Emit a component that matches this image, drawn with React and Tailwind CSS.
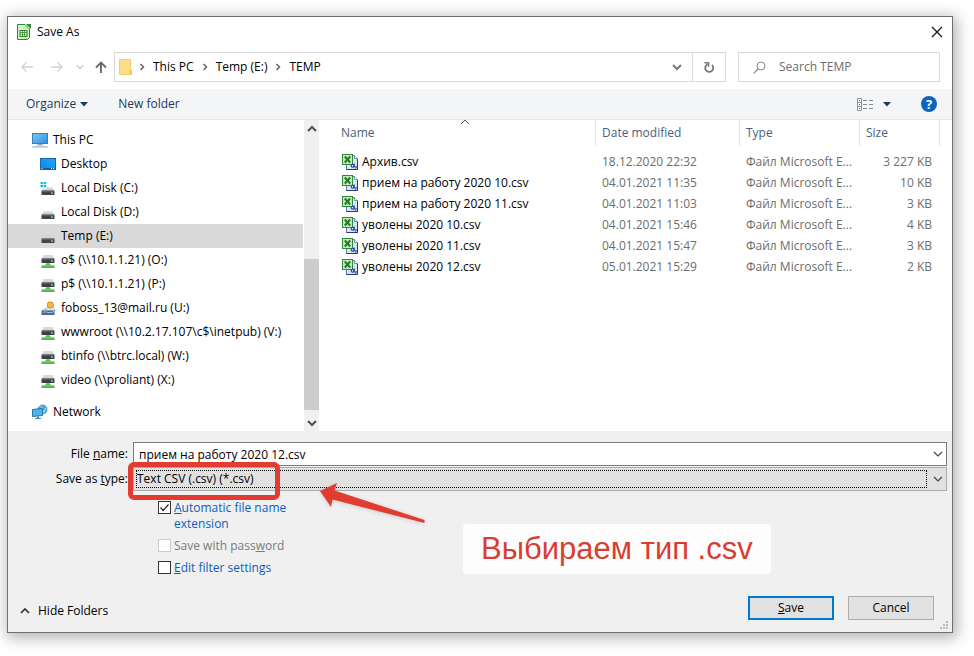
import React, { useState } from "react";

const treeItems = [
  { label: "This PC", icon: "pc", root: true },
  { label: "Desktop", icon: "desktop" },
  { label: "Local Disk (C:)", icon: "system" },
  { label: "Local Disk (D:)", icon: "disk" },
  { label: "Temp (E:)", icon: "disk", selected: true },
  { label: "o$ (\\\\10.1.1.21) (O:)", icon: "share" },
  { label: "p$ (\\\\10.1.1.21) (P:)", icon: "share" },
  { label: "foboss_13@mail.ru (U:)", icon: "user" },
  { label: "wwwroot (\\\\10.2.17.107\\c$\\inetpub) (V:)", icon: "share" },
  { label: "btinfo (\\\\btrc.local) (W:)", icon: "share" },
  { label: "video (\\\\proliant) (X:)", icon: "share" },
];

const files = [
  ["Архив.csv", "18.12.2020 22:32", "3 227 KB"],
  ["прием на работу 2020 10.csv", "04.01.2021 11:35", "10 KB"],
  ["прием на работу 2020 11.csv", "04.01.2021 11:03", "3 KB"],
  ["уволены 2020 10.csv", "04.01.2021 15:46", "4 KB"],
  ["уволены 2020 11.csv", "04.01.2021 15:47", "3 KB"],
  ["уволены 2020 12.csv", "05.01.2021 15:29", "2 KB"],
];

function Chevron({ dir = "down", className = "", width = 1.5, size = 10 }) {
  const d = {
    down: "M1 3l4 4 4-4",
    up: "M1 7l4-4 4 4",
    right: "M3.500 2l3 3-3 3",
  }[dir];
  return (
    <svg width={size} height={size} viewBox="0 0 10 10" className={"shrink-0 " + className} aria-hidden="true">
      <path d={d} fill="none" stroke="currentColor" strokeWidth={width} />
    </svg>
  );
}

function CalcIcon() {
  return (
    <svg width="16" height="16" viewBox="0 0 16 16" aria-hidden="true" className="shrink-0">
      <path d="M1.500.500h7.500l4.500 4.500v8.500l-2 2h-10z" fill="#d5efc9" stroke="#2f8d31" />
      <path d="M10 0h5v5z" fill="#2f8d31" />
      <path d="M3.500 6h8v7h-8z" fill="#2c8a27" />
      <path d="M4.500 7h1.600v1.300H4.500zM6.800 7h1.400v1.300H6.800zM8.900 7h1.600v1.300H8.900zM4.500 8.900h1.600v1.300H4.500zM6.800 8.900h1.400v1.300H6.800zM8.900 8.900h1.600v1.300H8.900zM4.500 10.800h1.600v1.300H4.500zM6.800 10.800h1.400v1.300H6.800zM8.900 10.800h1.600v1.300H8.900z" fill="#dff5d6" />
    </svg>
  );
}

function Drive() {
  return (
    <>
      <path d="M3.500 7.500h9L14.500 11h-13z" fill="#d3d6d7" />
      <rect x="1.500" y="10.500" width="13" height="4.500" rx=".6" fill="#3f4647" />
      <rect x="2" y="10.500" width="12" height="1" fill="#777e80" />
      <rect x="11" y="12.500" width="2" height="1" fill="#b9f0c4" />
    </>
  );
}

function TreeIcon({ kind }) {
  return (
    <svg width="16" height="16" viewBox="0 0 16 16" aria-hidden="true" className="shrink-0">
      <defs>
        <linearGradient id="screen" x1="0" y1="0" x2="1" y2="1">
          <stop offset="0" stopColor="#7cc8fa" />
          <stop offset="1" stopColor="#2b93e2" />
        </linearGradient>
        <linearGradient id="desk" x1="0" y1="1" x2="1" y2="0">
          <stop offset="0" stopColor="#0a84e8" />
          <stop offset="1" stopColor="#29a5fb" />
        </linearGradient>
      </defs>
      {kind === "pc" && (
        <>
          <rect x=".5" y="1.500" width="15" height="10" fill="url(#screen)" stroke="#3f7fae" />
          <path d="M6 12h4v1H6zM4 12.700h8v.8H4z" fill="#91a8b8" />
          <path d="M0 14.500h16v1H0z" fill="#8aa6cf" />
        </>
      )}
      {kind === "desktop" && (
        <>
          <rect x=".5" y="2.500" width="15" height="11" fill="url(#desk)" stroke="#1668ad" />
          <path d="M1 12h14v1H1z" fill="#0b5c9f" />
          <path d="M1.500 12h1v1h-1zM11 12h1v1h-1zM13 12h1v1h-1z" fill="#fff" />
        </>
      )}
      {kind === "disk" && <Drive />}
      {kind === "system" && (
        <>
          <Drive />
          <path d="M0 1h7v7.500H0z" fill="#fff" />
          <path d="M.5 2h2.500v2.300H.5zM3.700 2h2.500v2.300H3.700zM.5 5h2.500v2.300H.5zM3.700 5h2.500v2.300H3.700z" fill="#19b9d2" />
        </>
      )}
      {kind === "share" && (
        <>
          <path d="M3.500 3h9l2 4h-13z" fill="#d6d8d7" />
          <rect x="1.500" y="6.500" width="13" height="4.500" rx=".6" fill="#3a4042" />
          <rect x="2" y="6.500" width="12" height="1" fill="#6b7173" />
          <rect x="11" y="8.500" width="2" height="1" fill="#d8e4e0" />
          <path d="M6 11h4v2H6z" fill="#7cca72" />
          <path d="M1.500 13.500H5v-1h6v1h3.500V16h-13z" fill="#4fb344" />
          <path d="M1.500 13.500h13v.8h-13z" fill="#8ed886" />
        </>
      )}
      {kind === "user" && (
        <>
          <path d="M1.500 11l2-2.500h3L8 11z" fill="#ccd4da" />
          <path d="M5.500 11c0-3.500 2-4 5-4s4.500.5 4.500 4z" fill="#dce9f5" stroke="#7f9bb8" strokeWidth=".6" />
          <circle cx="10.300" cy="5" r="3.200" fill="#f7b63c" stroke="#c47a17" strokeWidth=".7" />
          <rect x="1.500" y="10.500" width="13" height="4.500" rx=".6" fill="#47678c" />
          <path d="M3 12.500c3-2 6 2 11-1" stroke="#a9c9e8" fill="none" />
        </>
      )}
      {kind === "network" && (
        <>
          <circle cx="10.500" cy="5.500" r="5" fill="#54a5d5" />
          <path d="M7 3c2-2 4 1 3 3s3 1 4-2M9 9l4-2" stroke="#b8e2f4" fill="none" />
          <path d="M.5 5.500l10-1v7l-10 1z" fill="#4db4ec" stroke="#2375ab" />
          <path d="M5 12.500h2v1.500H5zM3 14h6v1H3z" fill="#4b88ad" />
        </>
      )}
    </svg>
  );
}

function CsvIcon() {
  return (
    <svg width="16" height="16" viewBox="0 0 16 16" aria-hidden="true" className="shrink-0">
      <path d="M4.500 1.500h8l3 3v11h-11z" fill="#d9e4fa" stroke="#6176ae" />
      <path d="M12.500 1.500v3h3" fill="#fff" stroke="#6176ae" strokeWidth=".8" />
      <path d="M15.500 5v10.500h-11" fill="none" stroke="#26397c" />
      <rect x=".5" y=".5" width="10" height="10" fill="#c5e8bd" stroke="#2e8a35" />
      <path d="M2.800 2.500l5.400 6M8.200 2.500l-5.400 6" stroke="#1f7d24" strokeWidth="2" />
      <circle cx="10.600" cy="11.700" r="1.400" fill="#fff" stroke="#2947a0" strokeWidth="1.200" />
      <path d="M12.200 9.500v4M14 12v1.500l-.8 1" fill="none" stroke="#2947a0" strokeWidth="1.200" />
    </svg>
  );
}

function TitleBar() {
  return (
    <header className="flex h-[30px] items-center pl-2 pr-[5px]">
      <CalcIcon />
      <h1 className="ml-[5px] flex-1">Save As</h1>
      <button type="button" aria-label="Close" className="p-1">
        <svg width="12" height="12" viewBox="0 0 12 12" aria-hidden="true">
          <path d="M1 1l10 10M11 1L1 11" stroke="#111" strokeWidth="1.200" />
        </svg>
      </button>
    </header>
  );
}

function NavBar() {
  return (
    <nav className="flex items-center pb-[7px] pl-3 pr-3 pt-[5px]">
      <button type="button" aria-label="Back" className="text-[#d2d2d2]">
        <svg width="14" height="12" viewBox="0 0 14 12" aria-hidden="true"><path d="M13 6H2M6.500 1.500L2 6l4.500 4.500" fill="none" stroke="currentColor" strokeWidth="1.400" /></svg>
      </button>
      <button type="button" aria-label="Forward" className="ml-4 text-[#d2d2d2]">
        <svg width="14" height="12" viewBox="0 0 14 12" aria-hidden="true"><path d="M1 6h11M7.500 1.500L12 6l-4.500 4.500" fill="none" stroke="currentColor" strokeWidth="1.400" /></svg>
      </button>
      <button type="button" aria-label="Recent locations" className="ml-3 text-[#d2d2d2]">
        <Chevron size={8} width={2} />
      </button>
      <button type="button" aria-label="Up" className="ml-2.5 text-[#6a6a6a]">
        <svg width="14" height="14" viewBox="0 0 14 14" aria-hidden="true"><path d="M7 13V2.500M2 7.500l5-5 5 5" fill="none" stroke="currentColor" strokeWidth="1.900" /></svg>
      </button>
      <div className="ml-1.5 flex h-[30px] flex-1 items-center border border-[#d9d9d9]">
        <svg width="14" height="16" viewBox="0 0 14 16" className="ml-1" aria-hidden="true">
          <path d="M0 0h12v16H0z" fill="#fbdf86" />
          <path d="M.5.500h11v15H.5z" fill="none" stroke="#f1cf6e" />
          <path d="M10.500 16v-4l2.500-1.500V16z" fill="#f0c654" />
        </svg>
        <Chevron dir="right" className="ml-1 text-[#666]" />
        <a href="#this-pc" className="ml-1.5">This PC</a>
        <Chevron dir="right" className="ml-1.5 text-[#666]" />
        <a href="#temp-e" className="ml-1.5">Temp (E:)</a>
        <Chevron dir="right" className="ml-1.5 text-[#666]" />
        <a href="#temp" className="ml-1.5">TEMP</a>
        <button type="button" aria-label="Previous locations" className="ml-auto mr-2.5 text-[#777]">
          <Chevron width={2} />
        </button>
        <button type="button" aria-label="Refresh" className="flex h-full w-[33px] items-center justify-center border-l border-[#d9d9d9] text-[#777]">
          <svg width="12" height="14" viewBox="0 0 12 14" aria-hidden="true">
            <path d="M4.500 4.300a4 4 0 1 0 4.500.7" fill="none" stroke="currentColor" strokeWidth="1.800" />
            <path d="M1.500 2.800h4v4" fill="none" stroke="currentColor" strokeWidth="1.500" />
          </svg>
        </button>
      </div>
      <div className="ml-3 flex h-[30px] w-[202px] items-center border border-[#d9d9d9] pl-3.5">
        <svg width="13" height="13" viewBox="0 0 13 13" className="shrink-0" aria-hidden="true">
          <circle cx="8" cy="5" r="4" fill="none" stroke="#888" />
          <path d="M5 8L.7 12.300" stroke="#888" strokeWidth="1.200" />
        </svg>
        <input type="search" aria-label="Search TEMP" placeholder="Search TEMP" className="ml-[13px] w-full min-w-0 bg-transparent outline-none placeholder:text-[#6d6d6d] placeholder:opacity-100" />
      </div>
    </nav>
  );
}

function Toolbar() {
  return (
    <div className="flex h-[31px] items-center border-b border-[#e6e8ea] bg-[#f4f5f7] pl-[18px] pr-[15px] text-[#1e395b]">
      <button type="button" className="flex items-center gap-1">
        Organize
        <svg width="8" height="5" viewBox="0 0 8 5" aria-hidden="true"><path d="M0 0h8L4 4.500z" fill="#1e395b" /></svg>
      </button>
      <button type="button" className="ml-[30px]">New folder</button>
      <button type="button" aria-label="Change your view" className="ml-auto flex items-center gap-[9px]">
        <svg width="17" height="13" viewBox="0 0 17 13" aria-hidden="true">
          <path d="M.5.500h4v12h-4zM.5 4.500h4M.5 8.500h4" fill="#fff" stroke="#8c9096" />
          <path d="M2 2h1v1H2zM2 6h1v1H2zM2 10h1v1H2z" fill="#55595f" />
          <path d="M6 2.500h4M12 2.500h4M6 6.500h4M12 6.500h4M6 10.500h4M12 10.500h4" stroke="#858a90" />
        </svg>
        <svg width="8" height="5" viewBox="0 0 8 5" aria-hidden="true"><path d="M0 0h8L4 4.500z" fill="#1e395b" /></svg>
      </button>
      <button type="button" aria-label="Help" className="ml-[30px] flex size-4 items-center justify-center rounded-full bg-[#0a64c0] text-[13px] font-bold leading-4 text-white">?</button>
    </div>
  );
}

function Sidebar() {
  return (
    <aside className="flex w-[312px] shrink-0">
      <ul className="mr-px min-w-0 flex-1 pb-[7px] pt-2">
        {treeItems.map((item) => (
          <li key={item.label} className={item.selected ? "bg-[#d9d9d9]" : ""}>
            <a href="#folder" className={"flex h-6 items-center gap-[5px] whitespace-nowrap " + (item.root ? "pl-6" : "pl-8")}>
              <TreeIcon kind={item.icon} />
              {item.label}
            </a>
          </li>
        ))}
        <li className="mt-2">
          <a href="#network" className="flex h-6 items-center gap-[5px] pl-6">
            <TreeIcon kind="network" />
            Network
          </a>
        </li>
      </ul>
      <div className="flex w-[15px] flex-col bg-[#f0f0f0] text-[#505050]">
        <button type="button" aria-label="Scroll up" className="flex h-[18px] items-center justify-center"><Chevron dir="up" width={2} /></button>
        <div className="flex-1" />
        <div className="h-[151px] bg-[#cdcdcd]" />
        <button type="button" aria-label="Scroll down" className="flex h-[21px] items-center justify-center pt-1"><Chevron width={2} /></button>
      </div>
      <div className="w-px" />
    </aside>
  );
}

function FileTable() {
  const head = "h-[26px] border-r border-[#e5e5e5] text-left font-normal text-[#4c607a]";
  return (
    <div className="min-w-0 flex-1 pr-3">
      <table className="w-full table-fixed border-separate border-spacing-0">
        <colgroup>
          <col />
          <col className="w-[144px]" />
          <col className="w-[120px]" />
          <col className="w-[80px]" />
        </colgroup>
        <thead>
          <tr>
            <th className={head + " relative pl-[21px]"}>
              Name
              <Chevron dir="up" width={1} className="absolute left-[140px] top-[-3px] text-[#555]" />
            </th>
            <th className={head + " pl-1.5"}>Date modified</th>
            <th className={head + " pl-1.5"}>Type</th>
            <th className={head + " pl-1.5"}>Size</th>
          </tr>
        </thead>
        <tbody className="text-[#6d6d6d] before:block before:h-[5px]">
          {files.map(([name, date, size]) => (
            <tr key={name}>
              <td className="h-[21px] pl-[22px] text-black">
                <span className="flex items-center gap-1 whitespace-nowrap"><CsvIcon />{name}</span>
              </td>
              <td className="pl-1.5">{date}</td>
              <td className="whitespace-nowrap pl-1.5">Файл Microsoft E...</td>
              <td className="pr-2 text-right">{size}</td>
            </tr>
          ))}
        </tbody>
      </table>
    </div>
  );
}

function Check({ id, checked, onChange, disabled, children }) {
  return (
    <div className="flex w-[140px] items-start gap-[3px]">
      <span className="relative mt-px flex size-[13px] shrink-0">
        <input
          id={id}
          type="checkbox"
          checked={checked}
          onChange={onChange}
          disabled={disabled}
          className="size-[13px] appearance-none border border-[#333] bg-white disabled:border-[#ccc]"
        />
        {checked && (
          <svg width="13" height="13" viewBox="0 0 13 13" className="pointer-events-none absolute inset-0" aria-hidden="true">
            <path d="M2.500 6.500l2.700 3 5.300-6" fill="none" stroke="#222" strokeWidth="1.200" />
          </svg>
        )}
      </span>
      <label htmlFor={id} className={disabled ? "whitespace-nowrap text-[#7b7b7b]" : "text-[#0a5fbd]"}>{children}</label>
    </div>
  );
}

function Callout() {
  return (
    <>
      <div className="pointer-events-none absolute left-[120px] top-[31px] h-[38px] w-[152px] rounded-md border-[5px] border-[#e23c32]" />
      <svg width="112" height="48" viewBox="0 0 112 48" className="pointer-events-none absolute left-[308px] top-[49px] drop-shadow-sm" aria-hidden="true">
        <path d="M4 11l17-8-2.500 7.500L108.500 40v3L16.500 19.500 15 27z" fill="#e23c32" />
      </svg>
      <p className="absolute left-[455px] top-[93px] rounded-sm bg-[#fdfdfd] px-[18px] font-['Liberation_Sans',Arial,sans-serif] text-[31px] leading-[50px] text-[#d93d32]">
        Выбираем тип .csv
      </p>
    </>
  );
}

function Footer() {
  const [name, setName] = useState("прием на работу 2020 12.csv");
  const [auto, setAuto] = useState(true);
  const [edit, setEdit] = useState(false);
  return (
    <form className="relative bg-[#f0f0f0] pb-3 pt-[11px]" onSubmit={(e) => e.preventDefault()}>
      <div className="flex items-center pr-[5px]">
        <label htmlFor="file-name" className="w-[125px] shrink-0 pr-[5px] text-right">File <u>n</u>ame:</label>
        <div className="flex h-6 flex-1 items-center border border-[#7a7a7a] bg-white">
          <input id="file-name" value={name} onChange={(e) => setName(e.target.value)} className="h-5 min-w-0 flex-1 bg-transparent pl-[5px] outline-none" />
          <button type="button" aria-label="File name history" className="mr-[3px] text-[#444]"><Chevron width={1.2} /></button>
        </div>
      </div>
      <div className="mt-px flex items-center pr-[5px]">
        <label htmlFor="file-type" className="w-[125px] shrink-0 whitespace-nowrap pr-[5px] text-right">Save as <u>t</u>ype:</label>
        <div className="flex h-6 flex-1 items-center border border-[#adadad] bg-[#e1e1e1] pl-0.5">
          <select id="file-type" className="h-[18px] min-w-0 flex-1 appearance-none border border-dotted border-black bg-transparent leading-4 outline-none">
            <option>Text CSV (.csv) (*.csv)</option>
          </select>
          <Chevron width={1.2} className="ml-1.5 mr-[3px] text-[#444]" />
        </div>
      </div>
      <div className="ml-[150px] mt-[9px] flex flex-col gap-1.5">
        <Check id="auto-extension" checked={auto} onChange={() => setAuto(!auto)}><u>A</u>utomatic file name extension</Check>
        <Check id="with-password" checked={false} onChange={() => {}} disabled>Save with pass<u>w</u>ord</Check>
        <Check id="filter-settings" checked={edit} onChange={() => setEdit(!edit)}><span className="whitespace-nowrap"><u>E</u>dit filter settings</span></Check>
      </div>
      <div className="mt-5 flex items-center pl-3 pr-[18px]">
        <button type="button" className="flex items-center gap-2 pt-1.5"><Chevron dir="up" width={1.7} className="text-[#333]" />Hide Folders</button>
        <button type="submit" className="ml-auto h-6 w-[86px] border-2 border-[#0078d7] bg-[#e1e1e1]"><u>S</u>ave</button>
        <button type="button" className="ml-3.5 h-6 w-[86px] border border-[#adadad] bg-[#e1e1e1]">Cancel</button>
      </div>
      <svg width="9" height="9" viewBox="0 0 9 9" className="absolute bottom-0.5 right-[3px]" aria-hidden="true">
        <path d="M6 0h2v2H6zM3 3h2v2H3zM6 3h2v2H6zM0 6h2v2H0zM3 6h2v2H3zM6 6h2v2H6z" fill="#bdbdbd" />
      </svg>
      <Callout />
    </form>
  );
}

export default function App() {
  return (
    <div className="min-h-screen bg-white pb-[22px] pl-[7px] pr-[21px] pt-4 font-['Open_Sans','Noto_Sans',sans-serif] text-[12px] leading-4 text-black">
      <main className="border border-[#707070] bg-white shadow-[2px_3px_14px_2px_rgba(0,0,0,0.3)]">
        <TitleBar />
        <NavBar />
        <Toolbar />
        <div className="flex">
          <Sidebar />
          <FileTable />
        </div>
        <Footer />
      </main>
    </div>
  );
}
